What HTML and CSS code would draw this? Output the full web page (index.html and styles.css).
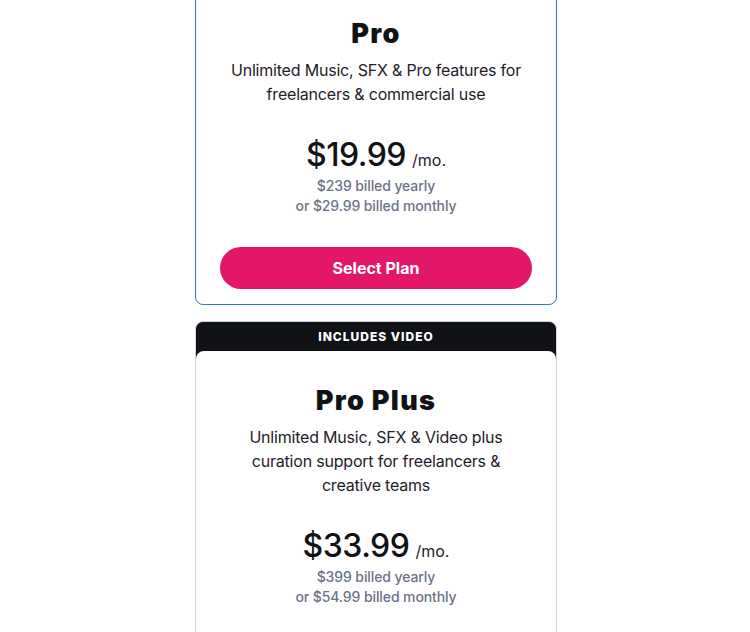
FILE: index.html
```html
<!DOCTYPE html>
<html>
<head>
<meta charset="utf-8">
<link rel="stylesheet" href="styles.css">
</head>
<body>
<main class="plans">
  <section class="card card-pro">
    <h2 class="title">Pro</h2>
    <p class="desc">Unlimited Music, SFX &amp; Pro features for freelancers &amp; commercial use</p>
    <div class="price"><span class="amount">$19.99</span> <span class="per">/mo.</span></div>
    <p class="billing">$239 billed yearly<br>or $29.99 billed monthly</p>
    <button class="select">Select Plan</button>
  </section>

  <section class="featured">
    <div class="badge">INCLUDES VIDEO</div>
    <div class="card card-plus">
      <h2 class="title">Pro Plus</h2>
      <p class="desc">Unlimited Music, SFX &amp; Video plus curation support for freelancers &amp; creative teams</p>
      <div class="price"><span class="amount">$33.99</span> <span class="per">/mo.</span></div>
      <p class="billing">$399 billed yearly<br>or $54.99 billed monthly</p>
    </div>
  </section>
</main>
</body>
</html>
```
FILE: styles.css
```css
* { box-sizing: border-box; }
html, body { margin: 0; padding: 0; background: #fff; }
body {
  font-family: Inter, "Noto Sans", sans-serif;
  color: #111216;
  overflow: hidden;
}
.plans {
  width: 362px;
  margin: -25px auto 0 195px;
  display: flex;
  flex-direction: column;
  gap: 16px;
}
.card {
  background: #fff;
  text-align: center;
}
.card-pro {
  border: 1px solid #2f6fde;
  border-radius: 8px;
  padding: 42px 24px 15px;
}
.title {
  margin: 0;
  font-size: 27px;
  font-weight: 900;
  line-height: 32px;
  letter-spacing: 1.3px;
}
.desc {
  margin: 8px auto 0;
  font-size: 16px;
  line-height: 24px;
  letter-spacing: -0.2px;
  color: #1f2128;
  max-width: 300px;
}
.price {
  margin-top: 29px;
  display: flex;
  justify-content: center;
  align-items: baseline;
  gap: 6px;
}
.amount {
  font-size: 32px;
  font-weight: 500;
  line-height: 40px;
  letter-spacing: -0.5px;
}
.per {
  font-size: 16px;
  color: #1f2128;
}
.billing {
  margin: 1px 0 0;
  font-size: 14px;
  line-height: 20px;
  font-weight: 500;
  letter-spacing: -0.1px;
  color: #6b7385;
}
.select {
  display: block;
  width: 100%;
  height: 42px;
  margin-top: 31px;
  border: 0;
  border-radius: 21px;
  background: #e3166a;
  color: #fff;
  font-family: Inter, "Noto Sans", sans-serif;
  font-size: 16px;
  font-weight: 700;
}
.featured {
  background: #111216;
  border-radius: 8px;
  border: 1px solid #cfd3dc;
  overflow: hidden;
}
.badge {
  height: 29px;
  display: flex;
  align-items: center;
  justify-content: center;
  color: #fff;
  font-size: 12px;
  font-weight: 800;
  letter-spacing: 1px;
}
.card-plus {
  border-radius: 8px 8px 0 0;
  padding: 34px 24px 40px;
  min-height: 300px;
}
.card-plus .desc { max-width: 270px; }
```
